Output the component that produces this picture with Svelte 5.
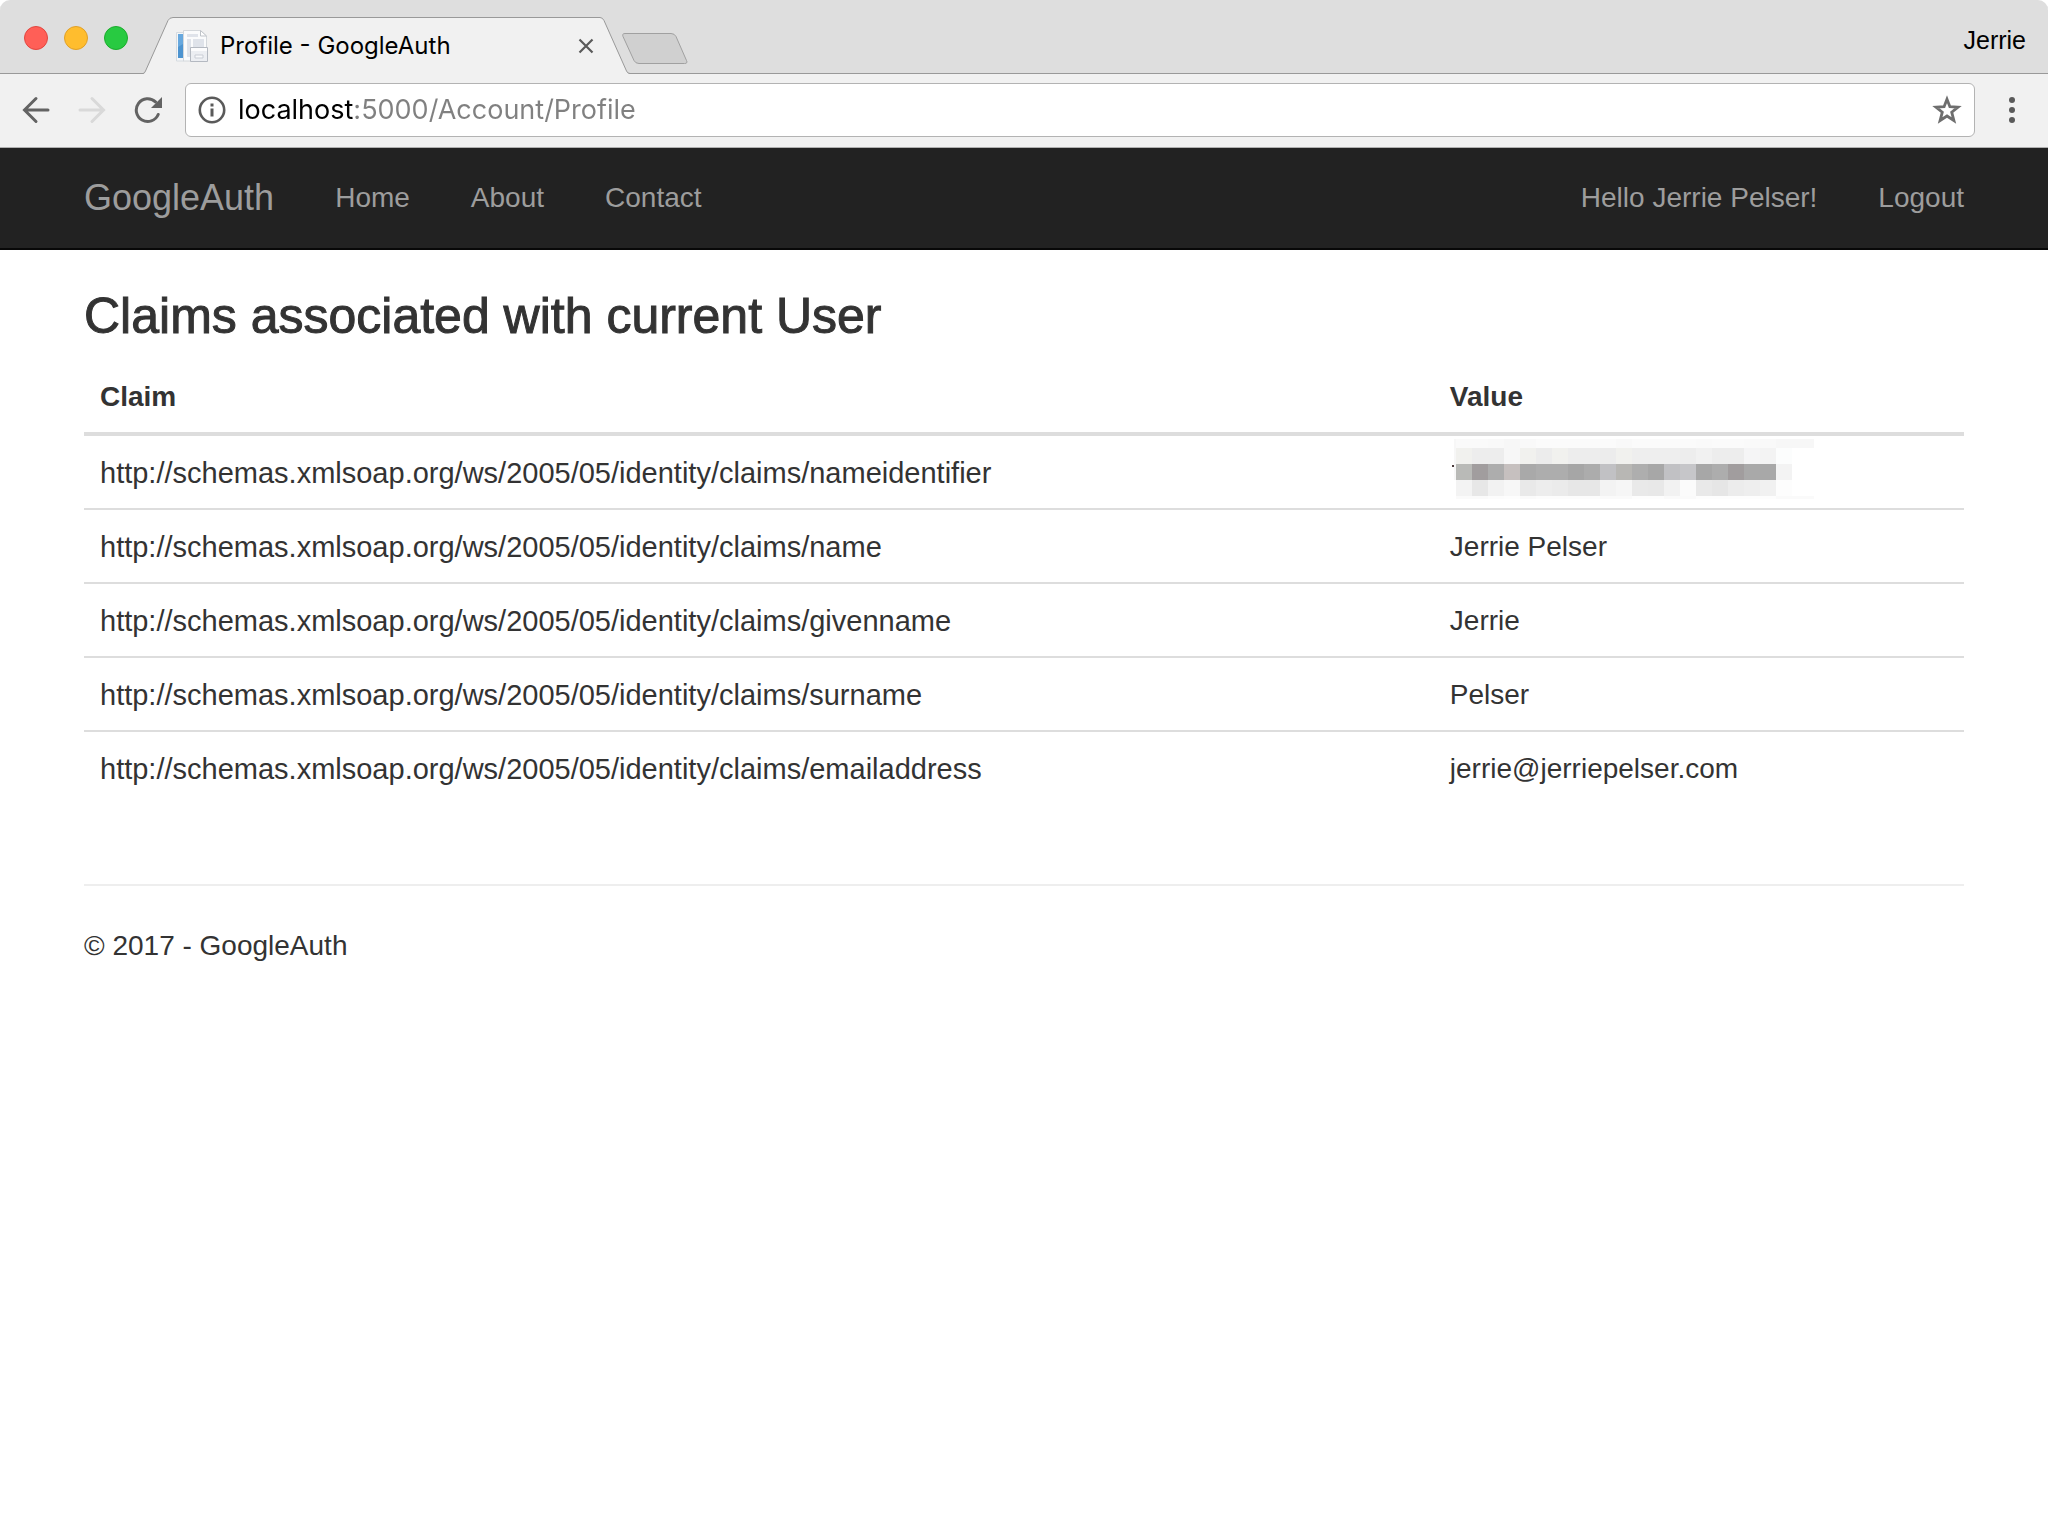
<script>
  const leftLinks = ['Home', 'About', 'Contact'];
  const rightLinks = ['Hello Jerrie Pelser!', 'Logout'];
  const base = 'http://schemas.xmlsoap.org/ws/2005/05/identity/claims/';
  const claims = [
    { type: 'nameidentifier', value: null },
    { type: 'name', value: 'Jerrie Pelser' },
    { type: 'givenname', value: 'Jerrie' },
    { type: 'surname', value: 'Pelser' },
    { type: 'emailaddress', value: 'jerrie@jerriepelser.com' }
  ];

  // Mosaic that hides the identifier: one grey per 16px cell.
  const mosaic = [
    { y: 0, h: 9, cells: 'fafafa fafafa f9f9f9 f7f7f7 f9f9f9 fbfbfb fbfbfb fbfbfb fbfbfb fbfbfb f9f9f9 fbfbfb fbfbfb fbfbfb fbfbfb fafafa fbfbfb fbfbfb fafafa f9f9f9 f7f7f7' },
    { y: 9, h: 16, cells: 'f1f1ee ededed ededed f7f7f7 f1f1ee ececec f1f1ee ededed ededed ececec f1f1ee eeeeee eeeeee eeeeee ededed f1f1f1 ededed ededed f5f5f6 f3f3f3 fcfdfd' },
    { y: 25, h: 16, cells: 'b9bab7 a19d9e adadad c6c0bf a9a9a9 adadad adadad a6a6a6 acacac c1c1c4 b8b7b4 aeaeae a7a7a7 c1c1c4 c6c6c9 a7a7a7 adadad a19d9e a9a9a9 a8a8a8 f3f3f3' },
    { y: 41, h: 16, cells: 'f3f3f3 e7e7e7 f2f2f2 f7f7f7 e9e9e9 ededed ebebeb e7e7e7 e7e7e7 f3f3f3 f6f6f6 e9e9e9 e8e8e8 f2f2f2 fbfbfb e9e9e9 e6e6e6 ececec eeeeee f1f1f1 fdfdfd' },
    { y: 57, h: 3, cells: 'fafafa fafafa fcfcfc fdfdfd fafafa fcfcfc fcfcfc fcfcfc fcfcfc fafafa fafafa fdfdfd fdfdfd fafafa fafafa fdfdfd fdfdfd fdfdfd fdfdfd fdfdfd fafafa' }
  ].map((row) => ({ ...row, cells: row.cells.split(' ') }));

  let address = $state('localhost:5000/Account/Profile');
</script>

<div class="window">
  <div class="tab-strip">
    <div class="lights">
      <button class="light red" aria-label="Close window"></button>
      <button class="light yellow" aria-label="Minimise window"></button>
      <button class="light green" aria-label="Zoom window"></button>
    </div>
    <div class="tab">
      <svg class="slope" width="30" height="57" viewBox="0 0 30 57" aria-hidden="true">
        <path d="M0 57 Q1.500 56.500 2.500 54 L25 3.500 Q26.500 .5 30 .5 V57Z" fill="#f1f1f1" />
        <path d="M0 56.500 Q1.500 56.500 2.500 54 L25 3.500 Q26.500 .5 30 .5" fill="none" stroke="#999" />
      </svg>
      <div class="tab-body">
        <svg class="favicon" width="32" height="32" viewBox="0 0 32 32" aria-hidden="true">
          <path d="M.5 2.500H8V31H.5Z" fill="#f4f6f8" stroke="#d5dbe0" />
          <path d="M2 4H7V28H2Z" fill="#4d94d0" />
          <path d="M2 4H7V14L2 17Z" fill="#67a8de" />
          <path d="M7.500 .5H24.500L30.500 6V31H7.500Z" fill="#fafbfc" stroke="#d3d7db" />
          <path d="M24.500 .5V6H30.500Z" fill="#fff" stroke="#bfc3c8" />
          <path d="M11 4H22V7H11Z M11 9H15V27H11Z M17 9H28V17H17Z" fill="#dfe3ea" />
          <path d="M14.500 17.500H31.500V31.500H14.500Z" fill="#eceef2" stroke="#b4b9c1" />
          <path d="M15 18H31V21H15Z" fill="#fcfcfd" />
          <path d="M19 25H27V28H19Z" fill="#f8f9fb" stroke="#c9cdd5" />
        </svg>
        <span class="tab-title">Profile - GoogleAuth</span>
        <button class="tab-close" aria-label="Close tab">
          <svg width="16" height="16" viewBox="0 0 16 16"><path d="M1.500 1.500 14.500 14.500M14.500 1.500 1.500 14.500" stroke="#5a5a5a" stroke-width="2.200" /></svg>
        </button>
      </div>
      <svg class="slope" width="30" height="57" viewBox="0 0 30 57" aria-hidden="true">
        <path d="M0 .5 Q2.500 .5 4 3.500 L26.500 54 Q27.500 56.500 30 57 H0Z" fill="#f1f1f1" />
        <path d="M0 .5 Q2.500 .5 4 3.500 L26.500 54 Q27.500 56.500 30 56.500" fill="none" stroke="#999" />
      </svg>
    </div>
    <button class="new-tab" aria-label="New tab">
      <svg width="66" height="32" viewBox="0 0 66 32"><path d="M3 .5H49Q52.500 .5 54 3.500L64.500 27.500Q66 30.500 62.500 30.500H17Q13.500 30.500 12 27.500L1 3.500Q-.2 .5 3 .5Z" fill="#d0d0d0" stroke="#a0a0a0" /></svg>
    </button>
    <button class="profile">Jerrie</button>
  </div>

  <div class="toolbar">
    <div class="controls">
      <button aria-label="Back">
        <svg width="28" height="28" viewBox="0 0 28 28"><path d="M26 14H3M14 2.500 2.500 14 14 25.500" fill="none" stroke="#636363" stroke-width="3" stroke-linecap="round" /></svg>
      </button>
      <button aria-label="Forward" disabled>
        <svg width="28" height="28" viewBox="0 0 28 28"><path d="M2 14H25M14 2.500 25.500 14 14 25.500" fill="none" stroke="#d9d9d9" stroke-width="3" stroke-linecap="round" /></svg>
      </button>
      <button aria-label="Reload">
        <svg width="28" height="28" viewBox="0 0 28 28"><path d="M24.200 18.500A11.400 11.400 0 1 1 21.500 5.800" fill="none" stroke="#636363" stroke-width="3" stroke-linecap="round" /><path d="M28 1V12H17Z" fill="#636363" /></svg>
      </button>
    </div>
    <div class="omnibox">
      <button aria-label="Site information">
        <svg width="28" height="28" viewBox="0 0 28 28"><circle cx="14" cy="14" r="12.200" fill="none" stroke="#5a5a5a" stroke-width="2.600" /><path d="M12.500 7.500h3v3h-3zM12.500 12.500h3v8h-3z" fill="#5a5a5a" /></svg>
      </button>
      <input type="text" aria-label="Address" bind:value={address} spellcheck="false" />
      <button aria-label="Bookmark this page">
        <svg width="30" height="30" viewBox="0 0 30 30"><path d="M15 4.200 17.900 11.700 26 12.100 19.700 17.200 21.900 25.500 15 21 8.100 25.500 10.300 17.200 4 12.100 12.100 11.700Z" fill="none" stroke="#6e6e6e" stroke-width="2.800" /></svg>
      </button>
    </div>
    <button class="menu" aria-label="Menu">
      <svg width="6" height="26" viewBox="0 0 6 26"><g fill="#5a5a5a"><circle cx="3" cy="3" r="3" /><circle cx="3" cy="13" r="3" /><circle cx="3" cy="23" r="3" /></g></svg>
    </button>
  </div>

  <nav class="navbar">
    <a class="brand" href="#home">GoogleAuth</a>
    {#each leftLinks as label}
      <a href="#{label.toLowerCase()}">{label}</a>
    {/each}
    <div class="nav-right">
      {#each rightLinks as label, i}
        <a href="#{i === 0 ? 'profile' : 'logout'}">{label}</a>
      {/each}
    </div>
  </nav>

  <main>
    <h3>Claims associated with current User</h3>
    <table>
      <colgroup><col class="claim-col" /><col /></colgroup>
      <thead>
        <tr><th scope="col">Claim</th><th scope="col">Value</th></tr>
      </thead>
      <tbody>
        {#each claims as claim}
          <tr>
            <td class="claim-type">{base}{claim.type}</td>
            <td>
              {#if claim.value}
                {claim.value}
              {:else}
                <svg class="mosaic" width="364" height="60" viewBox="0 0 364 60" shape-rendering="crispEdges" role="img" aria-label="Hidden value">
                  <path d="M2 26h2v2h-2z" fill="#4a3a3a" />
                  <path d="M4 0h2v41h-2z" fill="#f7f7f7" />
                  {#each mosaic as row}
                    {#each row.cells as cell, i}
                      <rect x={6 + i * 16} y={row.y} width="16" height={row.h} fill="#{cell}" />
                    {/each}
                  {/each}
                  <path d="M342 0h22v9h-22z" fill="#f7f7f7" />
                  <path d="M342 57h22v3h-22z" fill="#fafafa" />
                </svg>
              {/if}
            </td>
          </tr>
        {/each}
      </tbody>
    </table>
    <hr />
    <footer><p>© 2017 - GoogleAuth</p></footer>
  </main>
</div>

<style>
  :global(body) {
    margin: 0;
    background: #fff;
  }
  .window {
    min-height: 100vh;
    background: #fff;
    color: #333;
    font: 28px/40px 'Liberation Sans', Arial, sans-serif;
  }
  button {
    display: flex;
    padding: 0;
    border: 0;
    background: none;
    color: inherit;
    font: inherit;
  }
  svg {
    display: block;
    flex: none;
  }

  .tab-strip {
    display: flex;
    align-items: flex-end;
    height: 74px;
    padding: 0 22px 0 24px;
    border-radius: 10px 10px 0 0;
    background: #dedede;
    box-shadow: inset 0 -1px #999;
    box-sizing: border-box;
    color: #000;
    font: 24px/32px Inter, Roboto, sans-serif;
  }
  .lights {
    display: flex;
    gap: 16px;
    margin: 0 15px 24px 0;
  }
  .light {
    width: 24px;
    height: 24px;
    border: 1px solid #e2463f;
    border-radius: 50%;
    background: #ff5f57;
  }
  .yellow {
    border-color: #e0a028;
    background: #ffbd2e;
  }
  .green {
    border-color: #1bac2c;
    background: #28ca41;
  }
  .tab {
    display: flex;
    flex: 0 1 487px;
    height: 57px;
  }
  .tab-body {
    display: flex;
    flex: 1;
    align-items: center;
    padding: 0 6px 0 3px;
    border-top: 1px solid #999;
    background: #f1f1f1;
  }
  .tab-title {
    flex: 1;
    padding-left: 12px;
    white-space: nowrap;
  }
  .new-tab {
    margin: 0 0 9px -8px;
  }
  .profile {
    margin: 0 0 18px auto;
    font: 25px/32px 'Liberation Sans', Arial, sans-serif;
  }

  .toolbar {
    display: flex;
    align-items: center;
    gap: 23px;
    height: 74px;
    padding: 0 33px 2px 22px;
    border-bottom: 1px solid #b0b0b0;
    background: #f1f1f1;
    box-sizing: border-box;
  }
  .controls {
    display: flex;
    gap: 28px;
  }
  .omnibox {
    display: flex;
    flex: 1;
    align-items: center;
    height: 54px;
    padding: 0 12px;
    border: 1px solid #b3b3b3;
    border-radius: 6px;
    background: #fff;
    box-sizing: border-box;
  }
  .omnibox input {
    flex: 1;
    min-width: 0;
    margin: 0 12px;
    padding: 0;
    border: 0;
    outline: 0;
    /* host in black, path in grey */
    background: linear-gradient(90deg, #000 115px, #808080 115px);
    background-clip: text;
    -webkit-background-clip: text;
    -webkit-text-fill-color: transparent;
    color: #333;
    font: 27px/40px Inter, Roboto, sans-serif;
  }
  .menu {
    margin-left: 11px;
  }

  .navbar {
    display: flex;
    align-items: center;
    gap: 61px;
    height: 100px;
    padding: 0 84px;
    border-bottom: 2px solid #080808;
    background: #222;
  }
  .navbar a {
    color: #9d9d9d;
    text-decoration: none;
    white-space: nowrap;
  }
  .navbar .brand {
    font-size: 36px;
  }
  .nav-right {
    display: flex;
    gap: 61px;
    margin-left: auto;
  }

  main {
    padding: 40px 84px;
  }
  h3 {
    margin: 0 0 18px;
    font-size: 50px;
    font-weight: 500;
    line-height: 52px;
    -webkit-text-stroke: 1px #333;
  }
  table {
    width: 100%;
    margin-bottom: 80px;
    border-spacing: 0;
    table-layout: fixed;
  }
  .claim-col {
    width: 71.8%;
  }
  th,
  td {
    padding: 17px 16px 15px;
    text-align: left;
    overflow-wrap: anywhere;
  }
  th {
    border-bottom: 4px solid #ddd;
  }
  td {
    border-top: 2px solid #ddd;
  }
  tbody tr:first-child td {
    border-top: 0;
  }
  .claim-type {
    font-size: 29px;
  }
  .mosaic {
    margin: -14px 0 -6px;
  }
  hr {
    margin: 40px 0;
    border: 0;
    border-top: 2px solid #eee;
  }
  footer p {
    margin: 0;
  }
</style>
